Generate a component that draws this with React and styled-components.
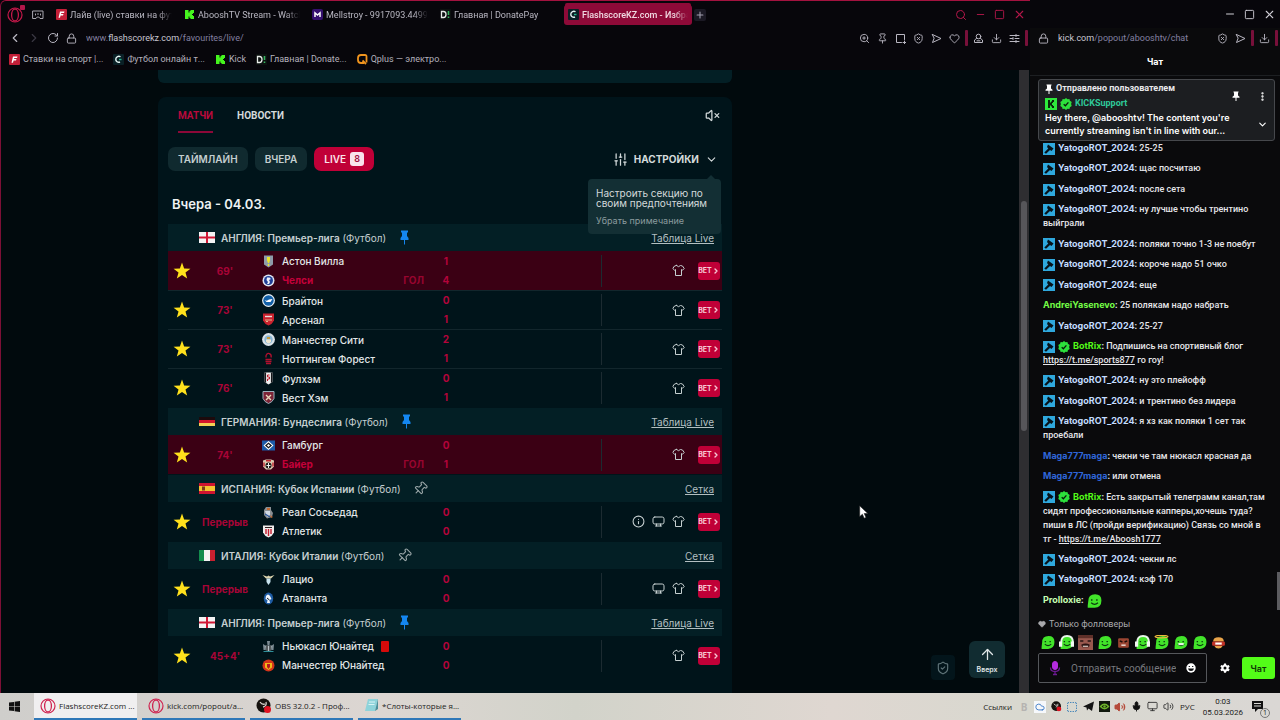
import styled, { createGlobalStyle, css } from "styled-components";
import {
  ArrowUp,
  ChevronDown,
  ChevronLeft,
  ChevronRight,
  Cloud,
  Download,
  Heart,
  Info,
  Lock,
  Mic,
  Minus,
  Monitor,
  Pin,
  Plus,
  RotateCw,
  Search,
  ShieldCheck,
  ShieldX,
  SlidersVertical,
  Square,
  SquareDashed,
  Volume2,
  VolumeX,
  X,
  ZoomIn,
  EllipsisVertical,
} from "lucide-react";

const GlobalStyle = createGlobalStyle`
  * {
    box-sizing: border-box;
  }
  body {
    margin: 0;
    background: #07060b;
    font-family: Inter, "Liberation Sans", sans-serif;
  }
  h1, h2, h3, p, ul {
    margin: 0;
    padding: 0;
  }
  ul {
    list-style: none;
  }
  button {
    border: 0;
    padding: 0;
    background: none;
    color: inherit;
    font-family: inherit;
  }
  svg {
    display: block;
    flex: none;
  }
`;

const tabs = [
  { icon: "flash", title: "Лайв (live) ставки на футбол" },
  { icon: "kick", title: "AbooshTV Stream - Watch Live" },
  { icon: "mell", title: "Mellstroy - 9917093.4499 руб" },
  { icon: "donate", title: "Главная | DonatePay" },
  { icon: "score", title: "FlashscoreKZ.com - Избранное", active: true },
];

const bookmarks = [
  { icon: "flash", title: "Ставки на спорт |..." },
  { icon: "score", title: "Футбол онлайн т..." },
  { icon: "kick", title: "Kick" },
  { icon: "donate", title: "Главная | Donate..." },
  { icon: "qplus", title: "Qplus — электро..." },
];

const leagues = [
  {
    flag: "england",
    country: "АНГЛИЯ: Премьер-лига",
    pinned: true,
    link: "Таблица Live",
    matches: [
      { time: "69'", goal: true, home: ["villa", "Астон Вилла", 1], away: ["chelsea", "Челси", 4] },
      { time: "73'", home: ["brighton", "Брайтон", 0], away: ["arsenal", "Арсенал", 1] },
      { time: "73'", home: ["city", "Манчестер Сити", 2], away: ["forest", "Ноттингем Форест", 1] },
      { time: "76'", home: ["fulham", "Фулхэм", 0], away: ["westham", "Вест Хэм", 1] },
    ],
  },
  {
    flag: "germany",
    country: "ГЕРМАНИЯ: Бундеслига",
    pinned: true,
    link: "Таблица Live",
    matches: [
      { time: "74'", goal: true, home: ["hamburg", "Гамбург", 0], away: ["bayer", "Байер", 1] },
    ],
  },
  {
    flag: "spain",
    country: "ИСПАНИЯ: Кубок Испании",
    link: "Сетка",
    matches: [
      { time: "Перерыв", info: true, tv: true, home: ["sociedad", "Реал Сосьедад", 0], away: ["athletic", "Атлетик", 0] },
    ],
  },
  {
    flag: "italy",
    country: "ИТАЛИЯ: Кубок Италии",
    link: "Сетка",
    matches: [
      { time: "Перерыв", tv: true, home: ["lazio", "Лацио", 0], away: ["atalanta", "Аталанта", 0] },
    ],
  },
  {
    flag: "england",
    country: "АНГЛИЯ: Премьер-лига",
    pinned: true,
    link: "Таблица Live",
    matches: [
      { time: "45+4'", redCard: true, home: ["newcastle", "Ньюкасл Юнайтед", 0], away: ["united", "Манчестер Юнайтед", 0] },
    ],
  },
];

const yatogo = { user: "YatogoROT_2024", color: "#c3dcff", mod: true };
const maga = { user: "Maga777maga", color: "#2f66d8" };
const botrix = { user: "BotRix", color: "#53fc18", mod: true, verified: true };

const messages = [
  { ...yatogo, text: "25-25" },
  { ...yatogo, text: "щас посчитаю" },
  { ...yatogo, text: "после сета" },
  { ...yatogo, text: "ну лучше чтобы трентино выйграли" },
  { ...yatogo, text: "поляки точно 1-3 не поебут" },
  { ...yatogo, text: "короче надо 51 очко" },
  { ...yatogo, text: "еще" },
  { user: "AndreiYasenevo", color: "#75fd46", text: "25 полякам надо набрать" },
  { ...yatogo, text: "25-27" },
  { ...botrix, text: "Подпишись на спортивный блог ", link: "https://t.me/sports877", after: " го гоу!" },
  { ...yatogo, text: "ну это плейофф" },
  { ...yatogo, text: "и трентино без лидера" },
  { ...yatogo, text: "я хз как поляки 1 сет так проебали" },
  { ...maga, text: "чекни че там нюкасл красная да" },
  { ...maga, text: "или отмена" },
  {
    ...botrix,
    text: "Есть закрытый телеграмм канал,там сидят профессиональные капперы,хочешь туда? пиши в ЛС (пройди верификацию) Связь со мной в тг - ",
    link: "https://t.me/Aboosh1777",
  },
  { ...yatogo, text: "чекни лс" },
  { ...yatogo, text: "кэф 170" },
  { user: "Prolloxie", color: "#c8ffb4", emote: true },
];

const Favicon = ({ name }) => (
  <svg width="11" height="11" viewBox="0 0 11 11" aria-hidden="true">
    {name === "flash" && (
      <>
        <rect width="11" height="11" rx="1" fill="#c41f38" />
        <path d="M4 2.500h4.500L8 4H5.300L5 5h2.500L7 6.400H4.600L4 8.800H2.500z" fill="#fff" />
      </>
    )}
    {name === "kick" && (
      <path d="M1 1h3.500v2.500h1V2h1V1H10v3H9v1H8v1h1v1h1v3H6.500V9h-1V7.500h-1V10H1z" fill="#45f51e" />
    )}
    {name === "mell" && (
      <>
        <rect width="11" height="11" rx="2" fill="#35106e" />
        <path d="M3 8V3.800l2.500 2.200L8 3.800V8" fill="none" stroke="#fff" strokeWidth="1.500" />
      </>
    )}
    {name === "donate" && (
      <>
        <rect width="11" height="11" fill="#0c1110" />
        <path d="M1.500 2.500h2a2.500 3 0 0 1 0 6h-2z" fill="none" stroke="#e8ece9" strokeWidth="1.300" />
        <path d="M8.500 2v4M8.500 7.500V9" stroke="#36b45f" strokeWidth="1.600" />
      </>
    )}
    {name === "score" && (
      <>
        <rect width="11" height="11" rx="1" fill="#0a2026" />
        <path d="M7.500 2.800A3 3 0 1 0 7 8" fill="none" stroke="#e5f5f3" strokeWidth="1.400" />
        <path d="M6 5.500h2.500" stroke="#27b58c" strokeWidth="1.400" />
      </>
    )}
    {name === "qplus" && (
      <>
        <path d="M9.500 8.500V2.500Q9.500 1 8 1H4Q1 1 1 4v2q0 3 3 3h3" fill="none" stroke="#f0941e" strokeWidth="1.800" />
        <path d="M5.500 6.500 9 10" stroke="#f0941e" strokeWidth="1.800" />
      </>
    )}
  </svg>
);

const OperaLogo = ({ color = "#c5184a" }) => (
  <svg width="16" height="16" viewBox="0 0 16 16" fill="none" stroke={color} aria-hidden="true">
    <circle cx="8" cy="8" r="7" strokeWidth="1.200" />
    <ellipse cx="8" cy="8" rx="3.400" ry="6" strokeWidth="1.300" />
  </svg>
);

const lineIcon = {
  fill: "none",
  stroke: "currentColor",
  strokeLinecap: "round",
  strokeLinejoin: "round",
  "aria-hidden": true,
};

const GxIcon = () => (
  <svg width="12" height="10" viewBox="0 0 12 10" {...lineIcon}>
    <path d="M1 1h10v7.500H8L6.800 7H5.200L4 8.500H1z" />
    <path d="M3.500 4v1M8.500 4v1M5.500 4h1" />
  </svg>
);

const SendIcon = () => (
  <svg width="11" height="11" viewBox="0 0 11 11" {...lineIcon}>
    <path d="M1.500 1.500 10 5.500l-8.500 4L3 5.500z" />
  </svg>
);

const SnapshotIcon = () => (
  <svg width="11" height="11" viewBox="0 0 11 11" {...lineIcon}>
    <path d="M9.500 6.500v-5h-8v8h5" />
    <path d="M9.500 8v3M8 9.500h3" />
  </svg>
);

const ProfileIcon = () => (
  <svg width="11" height="11" viewBox="0 0 11 11" {...lineIcon}>
    <circle cx="5.500" cy="3.500" r="2.300" />
    <path d="M3.500 5.500 1.500 7v2.500h8V7l-2-1.500M4 7.800h3" />
  </svg>
);

const EasyIcon = () => (
  <svg width="11" height="11" viewBox="0 0 11 11" {...lineIcon}>
    <path d="M1 2.500h9M1 5.500h2.500M6 5.500h4M1 8.500h9M4 4.500v2M7 1.500v2M7 7.500v2" />
  </svg>
);

const TvIcon = () => (
  <svg width="13" height="13" viewBox="0 0 13 13" {...lineIcon}>
    <rect x="1" y="2" width="11" height="7" rx="1.800" />
    <path d="M3.500 11h6M4.500 9v2M8.500 9v2" />
  </svg>
);

const ShirtIcon = () => (
  <svg width="13" height="13" viewBox="0 0 13 13" {...lineIcon}>
    <path d="M4.500 1.500 2.500 2 .800 4.500l1.700 1.700 1-.7v6h6v-6l1 .7 1.700-1.700L10.500 2l-2-.5Q6.500 4 4.500 1.500z" />
  </svg>
);

const Flag = ({ name }) => (
  <svg width="16" height="11" viewBox="0 0 16 11" aria-hidden="true">
    {name === "england" && (
      <>
        <rect width="16" height="11" fill="#f3f3f3" />
        <path d="M8 0v11M0 5.500h16" stroke="#d01835" strokeWidth="2" />
      </>
    )}
    {name === "germany" && (
      <>
        <rect y="1" width="16" height="3" fill="#1c0a0c" />
        <rect y="4" width="16" height="3" fill="#d3152b" />
        <rect y="7" width="16" height="3" fill="#f2cf55" />
      </>
    )}
    {name === "spain" && (
      <>
        <rect width="16" height="11" fill="#cf1430" />
        <rect y="3" width="16" height="5" fill="#f3c431" />
        <rect x="3" y="3.500" width="3" height="4" fill="#7d3b17" />
      </>
    )}
    {name === "italy" && (
      <>
        <rect width="16" height="11" fill="#f3f3f3" />
        <rect width="5" height="11" fill="#138c4d" />
        <rect x="11" width="5" height="11" fill="#c9202f" />
      </>
    )}
  </svg>
);

const shield = "M1 .500h11v7Q10.500 11 6.500 12.500 2.500 11 1 7.500z";

const Crest = ({ name }) => (
  <svg width="13" height="13" viewBox="0 0 13 13" aria-hidden="true">
    {name === "villa" && (
      <>
        <path d="M2 .500h9v9l-4.500 3L2 9.500z" fill="#8e9ba9" />
        <path d="M5 2h3v3.500L7 8H6L5 5.500zM5.800 9h1.400v2H5.800z" fill="#e9e32c" />
      </>
    )}
    {name === "chelsea" && (
      <>
        <circle cx="6.500" cy="6.500" r="6" fill="#dfe5f2" />
        <circle cx="6.500" cy="6.500" r="4.500" fill="#1f3f98" />
        <path d="M5 3.500h2.500L9 5 7 6l1 2-1 2H5l1-2-1.500-2z" fill="#eef1fa" />
      </>
    )}
    {name === "brighton" && (
      <>
        <circle cx="6.500" cy="6.500" r="6.400" fill="#e8f0f5" />
        <circle cx="6.500" cy="6.500" r="5.200" fill="#1260a8" />
        <path d="M2.500 6Q5 7.500 7 5.500l3.500-.5L8.500 8h-4z" fill="#fff" />
      </>
    )}
    {name === "arsenal" && (
      <>
        <path d={shield} fill="#c9222e" />
        <path d="M3 3.500h7" stroke="#e8dede" strokeWidth="1.400" />
        <path d="M3 7h7M4 8.500h2" stroke="#e6b48c" strokeWidth="1.200" />
      </>
    )}
    {name === "city" && (
      <>
        <circle cx="6.500" cy="6.500" r="6.400" fill="#d9e2e8" />
        <circle cx="6.500" cy="6.500" r="4.200" fill="#88b6d4" />
        <path d="M4 6.500h5v2q-1 2-2.500 2T4 8.500z" fill="#eee6cf" />
        <path d="M5 4h3v2H5z" fill="#c59a3b" />
      </>
    )}
    {name === "forest" && (
      <path
        d="M4 5.500C3.500 2 6 1 7 1.500s3 1 2 4M3.500 7.500h6M3.500 9.500h6M4 11.500h5"
        fill="none"
        stroke="#b1102f"
        strokeWidth="1.300"
      />
    )}
    {name === "fulham" && (
      <>
        <path d="M2.500 .500h8v9.500l-4 2.500-4-2.500z" fill="#f1f1f1" />
        <path d="M2.500 .500h1.600v10.500l-1.600-1zM8.900 .500h1.600v9.500l-1.600 1z" fill="#17191c" />
        <path d="M7.500 3h-2v2h2v2h-2v2" fill="none" stroke="#b81c2c" />
      </>
    )}
    {name === "westham" && (
      <>
        <path d={shield} fill="#7d2537" />
        <path d={shield} fill="none" stroke="#9db1bd" />
        <path d="m4 4 5 5M9 4 4 9" stroke="#e9d9bb" strokeWidth="1.400" />
      </>
    )}
    {name === "hamburg" && (
      <>
        <rect y="1.500" width="13" height="10" fill="#1c5aa8" />
        <path d="m6.500 2 5 4.500-5 4.500-5-4.500z" fill="#fff" />
        <path d="m6.500 3.500 3.500 3-3.500 3-3.500-3z" fill="#101114" />
        <path d="m6.500 5 1.600 1.500L6.500 8 4.900 6.500z" fill="#fff" />
      </>
    )}
    {name === "bayer" && (
      <>
        <path d="M1 2.500 4 1.500h5l3 1v6l-3 3H4l-3-3z" fill="#d9c9b0" />
        <circle cx="6.500" cy="7.500" r="3" fill="#1d1816" />
        <path d="M6.500 5v5M4.500 7.500h4" stroke="#f1f1f1" />
        <path d="M2 4.500v4M11 4.500v4M4 2.800h5" stroke="#c52630" strokeWidth="1.400" />
      </>
    )}
    {name === "sociedad" && (
      <>
        <path d="M4 1h5v3l2 3-1 4-5 1.500L2 9V4z" fill="#8a8f93" />
        <path d="M3 5h5v4L5 11z" fill="#cfd8e4" />
        <path d="M5 2h3v2H5zM8 9l3 2-2 1z" fill="#c0662f" />
        <path d="m3 8 5 3" stroke="#29569c" strokeWidth="1.300" />
      </>
    )}
    {name === "athletic" && (
      <>
        <path d={shield} fill="#f0ecec" />
        <path d="M4 4v5M6.500 4v7M9 4v5" stroke="#c31c2e" strokeWidth="1.400" />
        <path d="M3 2.500h7" stroke="#2a2020" />
      </>
    )}
    {name === "lazio" && (
      <>
        <path d="M.500 2 5 3.500l1.500-1L8 3.500 12.500 2 9 5.500H4z" fill="#dbd3ae" />
        <path d="M4.500 5.500h4V9l-2 3-2-3z" fill="#c8e4ef" />
      </>
    )}
    {name === "atalanta" && (
      <>
        <ellipse cx="6.500" cy="6.500" rx="4.700" ry="6" fill="#1d5ba3" />
        <path d="M4 4q2-3 4 0l1.500 3-2 1 .5 3H5l.5-3L3.500 7z" fill="#eef4fa" />
        <path d="m5 6 2.500 2" stroke="#0e1a27" />
      </>
    )}
    {name === "newcastle" && (
      <>
        <path d="M5 1h3l-.5 4h-2zM1 4l3 2-1 4H1.500zM12 4 9 6l1 4h1.500z" fill="#7c8b93" />
        <path d="M3.500 5.500h6V10l-3 2-3-2z" fill="#b9c3c8" />
        <path d="M5 5.500V11M8 5.500V11" stroke="#15181a" strokeWidth="1.200" />
        <path d="M1.500 11.500h10" stroke="#2f8f9a" />
      </>
    )}
    {name === "united" && (
      <>
        <circle cx="6.500" cy="6.500" r="6" fill="#d3341a" />
        <path d="M3 4h7v4.500L6.500 11 3 8.500z" fill="#f0b71a" />
        <path d="M5 5h3v3L6.500 10 5 8z" fill="#b51820" />
      </>
    )}
  </svg>
);

const Star = () => (
  <svg width="18" height="18" viewBox="0 0 16 16" aria-hidden="true">
    <path d="m8 .500 1.900 5.200 5.600.200-4.400 3.400 1.500 5.400L8 11.600l-4.600 3.100 1.500-5.400L.500 5.900l5.600-.2z" fill="#ffe11c" />
  </svg>
);

const BluePin = () => (
  <svg width="9" height="15" viewBox="0 0 9 15" aria-hidden="true">
    <path d="M1 .500h7V2.500H7V6l1.500 2v2h-8V8L2 6V2.500H1z" fill="#1486f0" />
    <path d="M4.500 9v5.500" stroke="#1486f0" />
  </svg>
);

const HammerBadge = () => (
  <svg width="12" height="12" viewBox="0 0 12 12" aria-hidden="true">
    <rect width="12" height="12" fill="#2fa8dd" />
    <path d="M5 1.500 10.500 5.500 8.500 8 7 7 3 10.800 1.300 9.500 5.300 5.500 4 4z" fill="#07131a" />
  </svg>
);

const VerifiedBadge = () => (
  <svg width="12" height="12" viewBox="0 0 12 12" aria-hidden="true">
    <path
      d="m6 0 1.500 1.200 1.900-.2.500 1.800L11.700 4l-.6 2 .6 2-1.800 1.200-.5 1.800-1.900-.2L6 12l-1.500-1.200-1.900.2-.5-1.800L.300 8l.6-2-.6-2 1.800-1.200L2.600 1l1.900.2z"
      fill="#2de03c"
    />
    <path d="m3.700 6.200 1.700 1.600 3-3.400" fill="none" stroke="#0b1a0b" strokeWidth="1.300" />
  </svg>
);

const KickBadge = () => (
  <svg width="12" height="12" viewBox="0 0 12 12" aria-hidden="true">
    <rect width="12" height="12" fill="#2ee83c" />
    <path d="M3 2h2v2.500h1V3.500h1V2h2v2H8v1H7v2h1v1h1v2H7V8.500H6v-1H5V10H3z" fill="#08260b" />
  </svg>
);

const FilledPin = () => (
  <svg width="8" height="10" viewBox="0 0 8 10" aria-hidden="true">
    <path d="M1.500.500h5v1H6v3l1.500 1.200v1H4.500V10h-1V6.700h-3v-1L2 4.500v-3h-.5z" fill="#fff" />
  </svg>
);

const GearIcon = () => (
  <svg width="10" height="10" viewBox="0 0 10 10" aria-hidden="true">
    <path
      d="M4 .500h2l.300 1.400 1 .6 1.400-.5 1 1.700-1.100 1v1l1.100.9-1 1.700-1.400-.4-1 .6L6 9.700H4l-.3-1.400-1-.6-1.400.5-1-1.700 1.100-1v-1l-1.100-.9 1-1.700 1.400.5 1-.6z"
      fill="#fff"
    />
    <circle cx="5" cy="5" r="1.500" fill="#0a0a0c" />
  </svg>
);

const Emote = ({ kind = "smile", size = 15 }) => (
  <svg width={size} height={size} viewBox="0 0 14 14" aria-hidden="true">
    {kind === "face" && (
      <>
        <rect width="14" height="14" fill="#99584e" />
        <path d="M0 0h14v3H0z" fill="#5f3029" />
        <path d="M2 5.500h3M9 5.500h3" stroke="#271514" strokeWidth="1.400" />
        <path d="M3 9q4-2 8 0l-1 2.500H4z" fill="#2a1211" />
        <path d="M4.500 10.500h5" stroke="#efe3dc" />
      </>
    )}
    {kind === "brick" && (
      <>
        <rect x="2" y="3" width="10" height="9" rx="1" fill="#9b4532" />
        <path d="m3.500 5.500 2.500 1M10.500 5.500 8 6.500" stroke="#180b08" strokeWidth="1.400" />
        <path d="M5 9.500h4" stroke="#f1e5df" strokeWidth="1.300" />
      </>
    )}
    {kind === "burger" && (
      <>
        <path d="M2 6q0-4 5-4t5 4zM3 10h8q-1 2.500-4 2.500T3 10z" fill="#e9a44a" />
        <rect x="1" y="6" width="12" height="4" rx="1" fill="#c23227" />
        <path d="M4 8h6" stroke="#fff" strokeWidth="2" />
      </>
    )}
    {!["face", "brick", "burger"].includes(kind) && (
      <>
        <path d="M2 7q0-6 6-6 5.500 0 5.500 5.500 0 6-6 6.500H1.500V11z" fill="#42e42a" />
        {kind === "phones" && (
          <>
            <path d="M2 7q0-6 5.500-6T13 7" fill="none" stroke="#e9f5ea" strokeWidth="1.800" />
            <path d="M0 6h3v5H0zM11 6h3v5h-3z" fill="#f2f7f2" />
          </>
        )}
        {kind === "angel" && <ellipse cx="7" cy="1.500" rx="6" ry="1.200" fill="none" stroke="#eab83c" strokeWidth="1.200" />}
        <path d="M5 5.500v1.200M9.500 5.500v1.200" stroke="#0b3a10" strokeWidth="1.300" />
        <path d="M4.500 8.500q3 2.800 6 0" fill="none" stroke="#0b3a10" />
        {kind === "teeth" && <rect x="5" y="7.500" width="5" height="2" fill="#e8f7e5" />}
      </>
    )}
  </svg>
);

const ObsIcon = ({ size = 16 }) => (
  <svg width={size} height={size} viewBox="0 0 16 16" aria-hidden="true">
    <circle cx="7.500" cy="7.500" r="7" fill="#16130f" />
    <path d="M4 4q2 3 5 2M10 4q1 4-3 5" fill="none" stroke="#d6d2cc" strokeWidth="1.300" />
    <circle cx="11.500" cy="11.500" r="3.500" fill="#df1220" />
  </svg>
);

const NoteIcon = () => (
  <svg width="15" height="15" viewBox="0 0 15 15" aria-hidden="true">
    <path d="M4 1h10l-3 12H1z" fill="#8ed3da" />
    <path d="m11 13 3-12v10z" fill="#4a8f9a" />
    <path d="M5 4h6M4.500 6.500h6" stroke="#d9f4f6" />
  </svg>
);

const MatchRow = ({ match }) => (
  <Match $goal={match.goal}>
    <StarButton type="button" aria-label="Избранное">
      <Star />
    </StarButton>
    <MatchTime>{match.time}</MatchTime>
    <Teams>
      {[match.home, match.away].map(([crest, name], i) => {
        const scored = match.goal && i === 1;
        return (
          <Team key={name} $scored={scored}>
            <Crest name={crest} />
            <span>{name}</span>
            {match.redCard && i === 0 && <RedCard />}
            {scored && <Goal>ГОЛ</Goal>}
          </Team>
        );
      })}
    </Teams>
    <Scores>
      <span>{match.home[2]}</span>
      <span>{match.away[2]}</span>
    </Scores>
    <MatchMeta>
      {match.info && <Info size={13} strokeWidth={2} />}
      {match.tv && <TvIcon />}
      <ShirtIcon />
      <BetButton type="button">
        BET
        <ChevronRight size={8} strokeWidth={4} />
      </BetButton>
    </MatchMeta>
  </Match>
);

const ChatMessage = ({ message }) => (
  <Message>
    {message.mod && (
      <Badge>
        <HammerBadge />
      </Badge>
    )}
    {message.verified && (
      <Badge>
        <VerifiedBadge />
      </Badge>
    )}
    <UserName $color={message.color}>{message.user}</UserName>
    <b>:</b> {message.text}
    {message.link && <a href={message.link}>{message.link}</a>}
    {message.after}
    {message.emote && (
      <Badge>
        <Emote size={16} />
      </Badge>
    )}
  </Message>
);

const App = () => {
  return (
    <Desktop>
      <GlobalStyle />
      <Windows>
        <BrowserWindow>
          <TitleBar>
            <OperaButton type="button" aria-label="Opera">
              <OperaLogo />
              <i />
            </OperaButton>
            <CornerButton type="button" aria-label="GX">
              <GxIcon />
            </CornerButton>
            <Tabs>
              {tabs.map((tab) => (
                <Tab key={tab.title} $active={tab.active}>
                  <Favicon name={tab.icon} />
                  <span>{tab.title}</span>
                </Tab>
              ))}
              <NewTab type="button" aria-label="Новая вкладка">
                <Plus size={10} strokeWidth={2.5} />
              </NewTab>
            </Tabs>
            <WindowControls $color="#b3174a">
              <Search size={12} />
              <Minus size={11} />
              <Square size={11} />
              <X size={13} />
            </WindowControls>
          </TitleBar>
          <AddressBar>
            <NavButtons>
              <ChevronLeft size={14} />
              <Faded>
                <ChevronRight size={14} />
              </Faded>
              <RotateCw size={12} />
              <Lock size={11} />
            </NavButtons>
            <Url>
              www.<b>flashscorekz.com</b>/favourites/live/
            </Url>
            <Tools>
              <ZoomIn size={11} />
              <Pin size={11} />
              <SnapshotIcon />
              <ShieldX size={11} />
              <SendIcon />
              <Heart size={11} />
            </Tools>
            <Divider />
            <Tools>
              <ProfileIcon />
              <Download size={11} />
              <EasyIcon />
            </Tools>
            <Divider />
          </AddressBar>
          <Bookmarks>
            {bookmarks.map((mark) => (
              <a href="#" key={mark.title}>
                <Favicon name={mark.icon} />
                {mark.title}
              </a>
            ))}
          </Bookmarks>
          <Viewport>
            <Page>
              <PreviousPanel />
              <Panel>
                <SectionTabs>
                  <SectionTab type="button" $active>
                    МАТЧИ
                  </SectionTab>
                  <SectionTab type="button">НОВОСТИ</SectionTab>
                  <VolumeX size={15} strokeWidth={2} />
                </SectionTabs>
                <Filters>
                  <Chip type="button">ТАЙМЛАЙН</Chip>
                  <Chip type="button">ВЧЕРА</Chip>
                  <Chip type="button" $live>
                    LIVE <span>8</span>
                  </Chip>
                  <SettingsWrap>
                    <SettingsButton type="button">
                      <SlidersVertical size={15} strokeWidth={2} />
                      НАСТРОЙКИ
                      <ChevronDown size={13} strokeWidth={2} />
                    </SettingsButton>
                    <Tooltip>
                      <p>Настроить секцию по своим предпочтениям</p>
                      <button type="button">Убрать примечание</button>
                    </Tooltip>
                  </SettingsWrap>
                </Filters>
                <DayTitle>Вчера - 04.03.</DayTitle>
                {leagues.map((league, i) => (
                  <League key={i}>
                    <LeagueHeader>
                      <Flag name={league.flag} />
                      <h3>
                        {league.country} <small>(Футбол)</small>
                      </h3>
                      {league.pinned ? (
                        <BluePin />
                      ) : (
                        <LoosePin>
                          <Pin size={15} strokeWidth={1.8} />
                        </LoosePin>
                      )}
                      <a href="#">{league.link}</a>
                    </LeagueHeader>
                    {league.matches.map((match) => (
                      <MatchRow key={match.home[1]} match={match} />
                    ))}
                  </League>
                ))}
              </Panel>
            </Page>
            <ShieldButton type="button" aria-label="Защита">
              <ShieldCheck size={14} strokeWidth={2} />
            </ShieldButton>
            <TopButton type="button">
              <ArrowUp size={17} strokeWidth={1.8} />
              Вверх
            </TopButton>
            <ScrollTrack>
              <i />
            </ScrollTrack>
          </Viewport>
        </BrowserWindow>

        <ChatWindow>
          <ChatTitleBar>
            <WindowControls $color="#d0ced6">
              <Minus size={12} />
              <Square size={11} />
              <X size={13} />
            </WindowControls>
          </ChatTitleBar>
          <AddressBar>
            <NavButtons>
              <Lock size={11} />
            </NavButtons>
            <Url>
              <b>kick.com</b>/popout/abooshtv/chat
            </Url>
            <Tools>
              <ShieldX size={11} />
              <SendIcon />
            </Tools>
            <Divider />
            <Tools>
              <Download size={11} />
            </Tools>
            <Divider />
          </AddressBar>
          <ChatTitle>Чат</ChatTitle>
          <Pinned>
            <PinnedHead>
              <div>
                <PinnedLine>
                  <FilledPin /> Отправлено пользователем
                </PinnedLine>
                <PinnedLine $green>
                  <KickBadge />
                  <VerifiedBadge /> KICKSupport
                </PinnedLine>
              </div>
              <FilledPin />
              <EllipsisVertical size={11} strokeWidth={3} />
            </PinnedHead>
            <PinnedBody>
              <p>Hey there, @abooshtv! The content you're currently streaming isn't in line with our...</p>
              <ChevronDown size={11} strokeWidth={2.5} />
            </PinnedBody>
          </Pinned>
          <Messages>
            {messages.map((message, i) => (
              <ChatMessage key={i} message={message} />
            ))}
          </Messages>
          <ChatFooter>
            <FollowersOnly>
              <Heart size={8} fill="#a9a9ad" /> Только фолловеры
            </FollowersOnly>
            <Emotes>
              <Emote />
              <Emote kind="phones" />
              <Emote kind="face" />
              <Emote />
              <Emote kind="brick" />
              <Emote kind="phones" />
              <Emote kind="angel" />
              <Emote kind="teeth" />
              <Emote />
              <Emote kind="burger" />
            </Emotes>
            <Composer>
              <MessageBox>
                <svg width="12" height="16" viewBox="0 0 12 16" fill="none" stroke="#b52be0" aria-hidden="true">
                  <rect x="3.500" y="1.500" width="5" height="8" rx="2.500" fill="#b52be0" />
                  <path d="M1.500 7.500q0 4 4.500 4t4.500-4M6 12v2.500M4 14.500h4" strokeWidth="1.300" stroke="#6c1a91" />
                </svg>
                <input type="text" aria-label="Сообщение" placeholder="Отправить сообщение" />
                <svg width="10" height="10" viewBox="0 0 10 10" aria-hidden="true">
                  <circle cx="5" cy="5" r="4.700" fill="#fff" />
                  <path d="M3.300 3v1M6.700 3v1" stroke="#0b0c0e" strokeWidth="1.200" />
                  <path d="M2 5.500h6q-.5 2.500-3 2.500T2 5.500z" fill="#0b0c0e" />
                </svg>
              </MessageBox>
              <GearIcon />
              <SendButton type="button">Чат</SendButton>
            </Composer>
          </ChatFooter>
          <ChatThumb />
        </ChatWindow>
      </Windows>

      <Taskbar>
        <StartButton type="button" aria-label="Пуск">
          <svg width="11" height="11" viewBox="0 0 11 11" fill="#111" aria-hidden="true">
            <path d="M0 1.600 5 .900v4.300H0zM5.600.800 11 0v5.200H5.600zM0 5.800h5v4.300l-5-.7zM5.600 5.800H11V11l-5.400-.8z" />
          </svg>
        </StartButton>
        <Task type="button" $active>
          <OperaLogo color="#cf2350" />
          <span>FlashscoreKZ.com ...</span>
        </Task>
        <Task type="button">
          <OperaLogo color="#cf2350" />
          <span>kick.com/popout/a...</span>
        </Task>
        <Task type="button">
          <ObsIcon />
          <span>OBS 32.0.2 - Проф...</span>
        </Task>
        <Task type="button">
          <NoteIcon />
          <span>*Слоты-которые я...</span>
        </Task>
        <Tray>
          <span>Ссылки</span>
          <TrayIcons>
            <Ghost>B</Ghost>
            <CloudBox>
              <Cloud size={10} color="#2d6fc0" />
            </CloudBox>
            <ObsIcon size={11} />
            <SquareDashed size={12} color="#3a7fb8" />
            <svg width="11" height="11" viewBox="0 0 11 11" aria-hidden="true">
              <path d="M0 5.500 11 .500 9 10 5.500 7.500 4 9.500 3.500 6.500z" fill="#141414" />
            </svg>
            <svg width="11" height="11" viewBox="0 0 11 11" aria-hidden="true">
              <rect width="11" height="11" fill="#11180d" />
              <path d="M1.500 5.500q4-4.500 8 0-4 4.500-8 0z" fill="none" stroke="#6fb52a" strokeWidth="1.400" />
              <circle cx="5.500" cy="5.500" r="1.200" fill="#6fb52a" />
            </svg>
            <Volume2 size={12} color="#b54a3a" fill="#b54a3a" />
            <Mic size={11} color="#111" fill="#111" />
            <Monitor size={11} color="#333" />
            <Volume2 size={11} color="#333" />
          </TrayIcons>
          <span>РУС</span>
          <Clock>
            <span>0:03</span>
            <span>05.03.2026</span>
          </Clock>
          <Notifications type="button" aria-label="Уведомления">
            <svg width="14" height="13" viewBox="0 0 14 13" aria-hidden="true">
              <path d="M1 1h11v8H7l-3 3V9H1z" fill="#111" />
              <path d="M3 3.500h7M3 6h7" stroke="#d8d8d4" />
            </svg>
            <span>1</span>
          </Notifications>
        </Tray>
      </Taskbar>

      <Cursor width="10" height="14" viewBox="0 0 10 14" aria-hidden="true">
        <path d="M.700.800v10.800l2.700-2.400 1.800 4 1.800-.8-1.800-3.900h3.600z" fill="#fff" stroke="#222" strokeWidth=".6" />
      </Cursor>
    </Desktop>
  );
};

const Desktop = styled.div`
  position: relative;
  height: 100vh;
  display: flex;
  flex-direction: column;
  overflow: hidden;
`;

const Windows = styled.div`
  flex: 1;
  min-height: 0;
  display: flex;
`;

const BrowserWindow = styled.section`
  flex: 1;
  min-width: 0;
  display: flex;
  flex-direction: column;
  border-top: 1px solid #a3123f;
  border-left: 1px solid #7c1036;
  border-top-left-radius: 6px;
  background: #07060b;
`;

const TitleBar = styled.header`
  height: 27px;
  display: flex;
  align-items: center;
  padding-left: 6px;
`;

const OperaButton = styled.button`
  position: relative;

  & i {
    position: absolute;
    top: -2px;
    right: -2px;
    width: 5px;
    height: 5px;
    border-radius: 1px;
    background: #b3174a;
  }
`;

const CornerButton = styled.button`
  width: 29px;
  display: flex;
  justify-content: center;
  color: #aaa8b2;
`;

const Tabs = styled.nav`
  flex: 1;
  min-width: 0;
  align-self: stretch;
  display: flex;
  align-items: center;
`;

const Tab = styled.div`
  flex: 0 1 128px;
  min-width: 0;
  height: 20px;
  display: flex;
  align-items: center;
  gap: 3px;
  padding: 0 8px 0 4px;
  border-radius: 3px;
  color: #b9b7c2;
  font-size: 9px;
  font-family: Roboto, sans-serif;

  & span {
    flex: 1;
    min-width: 0;
    overflow: hidden;
    white-space: nowrap;
    mask-image: linear-gradient(90deg, #000 86%, transparent);
  }

  ${({ $active }) =>
    $active &&
    css`
      padding-right: 4px;
      background: #8e0a38;
      box-shadow: 0 -3px 0 -1px #8e0a38;
      color: #f1dbe3;
      font-weight: 500;
    `}
`;

const NewTab = styled.button`
  width: 12px;
  height: 12px;
  margin-left: 2px;
  display: flex;
  align-items: center;
  justify-content: center;
  border-radius: 2px;
  background: #1b1924;
  color: #a5a2b2;
`;

const WindowControls = styled.div`
  display: flex;
  align-items: center;
  gap: 8px;
  padding-right: 4px;
  color: ${({ $color }) => $color};
`;

const AddressBar = styled.div`
  height: 20px;
  display: flex;
  align-items: center;
  padding-right: 2px;
  color: #b9b7c2;
`;

const NavButtons = styled.div`
  display: grid;
  grid-auto-flow: column;
  grid-auto-columns: 19px;
  align-items: center;
  justify-items: center;
  padding: 0 5px 0 4px;
`;

const Faded = styled.span`
  color: #3a3843;
`;

const Url = styled.div`
  flex: 1;
  min-width: 0;
  overflow: hidden;
  white-space: nowrap;
  color: #8380a0;
  font-size: 9px;
  font-family: Roboto, sans-serif;

  & b {
    color: #c9c7d2;
    font-weight: 400;
  }
`;

const Tools = styled.div`
  display: flex;
  gap: 7px;
  padding: 0 5px;
`;

const Divider = styled.i`
  width: 3px;
  height: 16px;
  border-radius: 1px;
  background: #78103a;
`;

const Bookmarks = styled.nav`
  height: 22px;
  display: flex;
  align-items: center;
  gap: 10px;
  padding-left: 8px;

  & a {
    display: flex;
    align-items: center;
    gap: 3px;
    color: #b3b1bc;
    font-size: 9px;
    font-family: Roboto, sans-serif;
    text-decoration: none;
    white-space: nowrap;
  }
`;

const Viewport = styled.main`
  position: relative;
  flex: 1;
  min-height: 0;
  overflow: hidden;
  background: #010a0d;
`;

const Page = styled.div`
  max-width: 731px;
  padding-left: 157px;
  color: #d3dadb;
`;

const PreviousPanel = styled.div`
  height: 13px;
  margin-bottom: 14px;
  border-radius: 0 0 6px 6px;
  background: #031f25;
`;

const Panel = styled.section`
  padding: 0 10px 40px;
  border-radius: 8px;
  background: #00141a;
`;

const SectionTabs = styled.div`
  display: flex;
  align-items: center;
  gap: 24px;
  padding: 0 2px 0 10px;
  height: 36px;

  & > svg {
    margin-left: auto;
  }
`;

const SectionTab = styled.button`
  height: 36px;
  border-bottom: 2px solid ${({ $active }) => ($active ? "#8c0838" : "transparent")};
  border-top: 2px solid transparent;
  color: ${({ $active }) => ($active ? "#b80a3c" : "#d3dadb")};
  font-size: 10px;
  font-family: Roboto, sans-serif;
  font-weight: 700;
`;

const Filters = styled.div`
  display: flex;
  align-items: center;
  gap: 7px;
  margin-top: 14px;
`;

const Chip = styled.button`
  height: 24px;
  display: flex;
  align-items: center;
  gap: 4px;
  padding: 0 10px;
  border-radius: 7px;
  background: ${({ $live }) => ($live ? "#c00037" : "#102a2f")};
  color: ${({ $live }) => ($live ? "#fbe3ea" : "#c5cfd0")};
  font-size: 10px;
  font-weight: 600;

  & span {
    width: 14px;
    height: 14px;
    border-radius: 3px;
    background: #f9e4ec;
    color: #a1123e;
    font-size: 9px;
    line-height: 14px;
  }
`;

const SettingsWrap = styled.div`
  position: relative;
  margin-left: auto;
  padding-right: 4px;
`;

const SettingsButton = styled.button`
  display: flex;
  align-items: center;
  gap: 6px;
  font-size: 10px;
  font-weight: 700;
`;

const Tooltip = styled.div`
  position: absolute;
  top: 27px;
  right: 1px;
  z-index: 1;
  width: 133px;
  padding: 9px 8px 7px;
  border-radius: 4px;
  background: #132f34;

  &::before {
    content: "";
    position: absolute;
    top: -4px;
    right: 6px;
    border: 4px solid transparent;
    border-top: 0;
    border-bottom-color: #132f34;
  }
  & p {
    margin-bottom: 7px;
    font-size: 10px;
    line-height: 10px;
  }
  & button {
    display: block;
    color: #8b9b9e;
    font-size: 9px;
    line-height: 12px;
  }
`;

const DayTitle = styled.h2`
  padding: 24px 4px 10px;
  color: #eef2f3;
  font-size: 13px;
  font-weight: 600;
  line-height: 19px;
`;

const League = styled.section`
  margin-bottom: 1px;
`;

const LeagueHeader = styled.div`
  height: 27px;
  display: flex;
  align-items: center;
  padding: 0 8px 0 31px;
  background: #031f25;

  & h3 {
    margin: 0 14px 0 6px;
    color: #c6cfd1;
    font-size: 10px;
    font-weight: 600;
  }
  & small {
    font-size: 10px;
    font-weight: 400;
  }
  & a {
    margin-left: auto;
    color: #b3bfc1;
    font-size: 10px;
  }
`;

const LoosePin = styled.span`
  margin-left: -2px;
  color: #9aa6a8;
  rotate: 45deg;
`;

const Match = styled.div`
  height: 39px;
  display: grid;
  grid-template-columns: 28px 58px minmax(0, 1fr) 24px 143px 121px;
  align-items: center;
  background: ${({ $goal }) => ($goal ? "#3b0014" : "transparent")};

  & + & {
    border-top: 1px solid #12262c;
  }
`;

const StarButton = styled.button`
  display: flex;
  justify-content: center;
`;

const MatchTime = styled.span`
  color: #a80437;
  font-size: 10px;
  font-weight: 700;
  text-align: center;
`;

const Teams = styled.div`
  padding-left: 8px;
`;

const Team = styled.div`
  height: 19px;
  display: flex;
  align-items: center;
  gap: 7px;
  color: ${({ $scored }) => ($scored ? "#c4003a" : "#e2e7e8")};
  font-size: 10px;
  font-weight: ${({ $scored }) => ($scored ? 700 : 500)};
`;

const RedCard = styled.i`
  width: 8px;
  height: 11px;
  border-radius: 1px;
  background: #d50a0a;
`;

const Goal = styled.span`
  margin-left: auto;
  padding-right: 10px;
  color: #98052f;
`;

const Scores = styled.div`
  display: flex;
  flex-direction: column;
  color: #b3043b;
  font-size: 10px;
  font-weight: 700;
  line-height: 19px;
  text-align: center;
`;

const MatchMeta = styled.div`
  grid-column: 6;
  height: 32px;
  display: flex;
  align-items: center;
  justify-content: flex-end;
  gap: 7px;
  padding-right: 2px;
  border-left: 1px solid #1c2b31;
  color: #c5cfd0;
`;

const BetButton = styled.button`
  width: 22px;
  height: 18px;
  margin-left: 6px;
  display: flex;
  align-items: center;
  justify-content: center;
  border-radius: 3px;
  background: #c00037;
  color: #f7c9d6;
  font-size: 7px;
  font-weight: 700;
`;

const ShieldButton = styled.button`
  position: absolute;
  right: 75px;
  bottom: 13px;
  width: 24px;
  height: 25px;
  display: flex;
  align-items: center;
  justify-content: center;
  border-radius: 4px;
  background: #03151b;
  color: #5f7479;
`;

const TopButton = styled.button`
  position: absolute;
  right: 25px;
  bottom: 15px;
  width: 36px;
  height: 37px;
  display: flex;
  flex-direction: column;
  align-items: center;
  justify-content: center;
  gap: 2px;
  border-radius: 6px;
  background: #112c31;
  color: #e1e8e9;
  font-size: 7px;
  font-weight: 600;
`;

const ScrollTrack = styled.div`
  position: absolute;
  inset: 0 1px 0 auto;
  width: 10px;
  background: #2e2e31;

  & i {
    position: absolute;
    top: 21%;
    left: 2px;
    width: 6px;
    height: 37%;
    border-radius: 3px;
    background: #56565a;
  }
`;

const ChatWindow = styled.section`
  position: relative;
  flex: 0 0 250px;
  display: flex;
  flex-direction: column;
  background: #0a0a0c;
  color: #fff;
`;

const ChatTitleBar = styled.header`
  height: 28px;
  display: flex;
  align-items: center;
  justify-content: flex-end;
  background: #07060b;
`;

const ChatTitle = styled.h1`
  padding: 6px 0 5px;
  border-bottom: 1px solid #1d1f22;
  font-size: 9px;
  font-weight: 700;
  line-height: 16px;
  text-align: center;
`;

const Pinned = styled.div`
  margin: 3px 5px 0 8px;
  padding: 1px 6px 3px;
  border: 1px solid #46484c;
  border-radius: 3px;
  background: #1c1e21;
`;

const PinnedHead = styled.div`
  display: flex;
  align-items: center;
  gap: 17px;

  & > div {
    flex: 1;
  }
`;

const PinnedBody = styled.div`
  display: flex;
  align-items: center;
  justify-content: space-between;
  gap: 8px;

  & p {
    font-size: 9px;
    font-weight: 600;
    line-height: 13px;
  }
`;

const PinnedLine = styled.div`
  display: flex;
  align-items: center;
  gap: 3px;
  color: ${({ $green }) => ($green ? "#2fc99a" : "#e9e9ec")};
  font-size: 9px;
  font-family: Roboto, sans-serif;
  font-weight: 700;
  line-height: 15px;
`;

const Messages = styled.ul`
  flex: 1;
  min-height: 0;
  display: flex;
  flex-direction: column;
  justify-content: space-between;
  padding: 0 12px 0 13px;
`;

const Message = styled.li`
  color: #e6e6ea;
  font-size: 9px;
  font-family: Roboto, sans-serif;
  font-weight: 500;
  line-height: 14px;

  & a {
    color: inherit;
  }
`;

const Badge = styled.span`
  display: inline-block;
  margin-right: 3px;
  vertical-align: middle;
`;

const UserName = styled.b`
  color: ${({ $color }) => $color};
  font-family: Inter, sans-serif;
  font-weight: 700;
`;

const ChatFooter = styled.footer`
  padding: 8px 5px 10px 8px;
`;

const FollowersOnly = styled.div`
  display: flex;
  align-items: center;
  gap: 3px;
  color: #a9a9ad;
  font-size: 9px;
  font-family: Roboto, sans-serif;
  line-height: 14px;
`;

const Emotes = styled.div`
  height: 22px;
  display: flex;
  align-items: center;
  gap: 4px;
  padding-left: 2px;
`;

const Composer = styled.form`
  display: flex;
  align-items: center;
  justify-content: space-between;
`;

const MessageBox = styled.label`
  width: 169px;
  height: 30px;
  display: flex;
  align-items: center;
  gap: 10px;
  padding: 0 10px;
  border: 1px solid #55575b;
  border-radius: 2px;

  & input {
    flex: 1;
    min-width: 0;
    padding: 0;
    border: 0;
    outline: 0;
    background: none;
    color: #fff;
    font-family: Roboto, sans-serif;
    font-size: 10px;
  }
  & input::placeholder {
    color: #77797e;
  }
`;

const SendButton = styled.button`
  width: 33px;
  height: 22px;
  border-radius: 3px;
  background: #53fc18;
  color: #0f3306;
  font-size: 9px;
  font-weight: 600;
`;

const ChatThumb = styled.i`
  position: absolute;
  right: 0;
  bottom: 83px;
  width: 3px;
  height: 38px;
  background: #5c5c60;
`;

const Taskbar = styled.footer`
  height: 27px;
  display: flex;
  gap: 5px;
  background: linear-gradient(90deg, #cfcecb, #dcd6d2 30%, #d2d3ca 45%, #dfd7d1 65%, #d8d8cf 80%, #dad7d4);
  color: #222;
  font-family: "Open Sans", "Noto Sans", sans-serif;
  font-size: 8px;
`;

const StartButton = styled.button`
  width: 29px;
  display: flex;
  align-items: center;
  justify-content: center;
`;

const Task = styled.button`
  width: 103px;
  display: flex;
  align-items: center;
  gap: 3px;
  padding-left: 6px;
  border-bottom: 2px solid #2f78b8;
  background: ${({ $active }) => ($active ? "#f0eff0" : "transparent")};
  color: inherit;
  font-size: 8px;
  white-space: nowrap;
`;

const Tray = styled.div`
  margin-left: auto;
  display: flex;
  align-items: center;
  gap: 4px;
  padding-right: 15px;
`;

const TrayIcons = styled.div`
  display: grid;
  grid-auto-flow: column;
  grid-auto-columns: 16px;
  align-items: center;
  justify-items: center;
`;

const Ghost = styled.span`
  color: #b5b3b1;
  font-size: 10px;
  font-weight: 700;
`;

const CloudBox = styled.span`
  padding: 1px;
  background: #f6f8fb;
`;

const Clock = styled.div`
  display: flex;
  flex-direction: column;
  align-items: center;
  margin: 0 4px;
  font-size: 8px;
  font-family: Roboto, sans-serif;
  line-height: 11px;
`;

const Notifications = styled.button`
  position: relative;

  & span {
    position: absolute;
    right: -5px;
    bottom: -5px;
    width: 10px;
    height: 10px;
    border: 1px solid #777;
    border-radius: 50%;
    background: #d8d6d2;
    font-size: 7px;
    line-height: 8px;
  }
`;

const Cursor = styled.svg`
  position: absolute;
  top: 505px;
  left: 859px;
`;

export default App;
